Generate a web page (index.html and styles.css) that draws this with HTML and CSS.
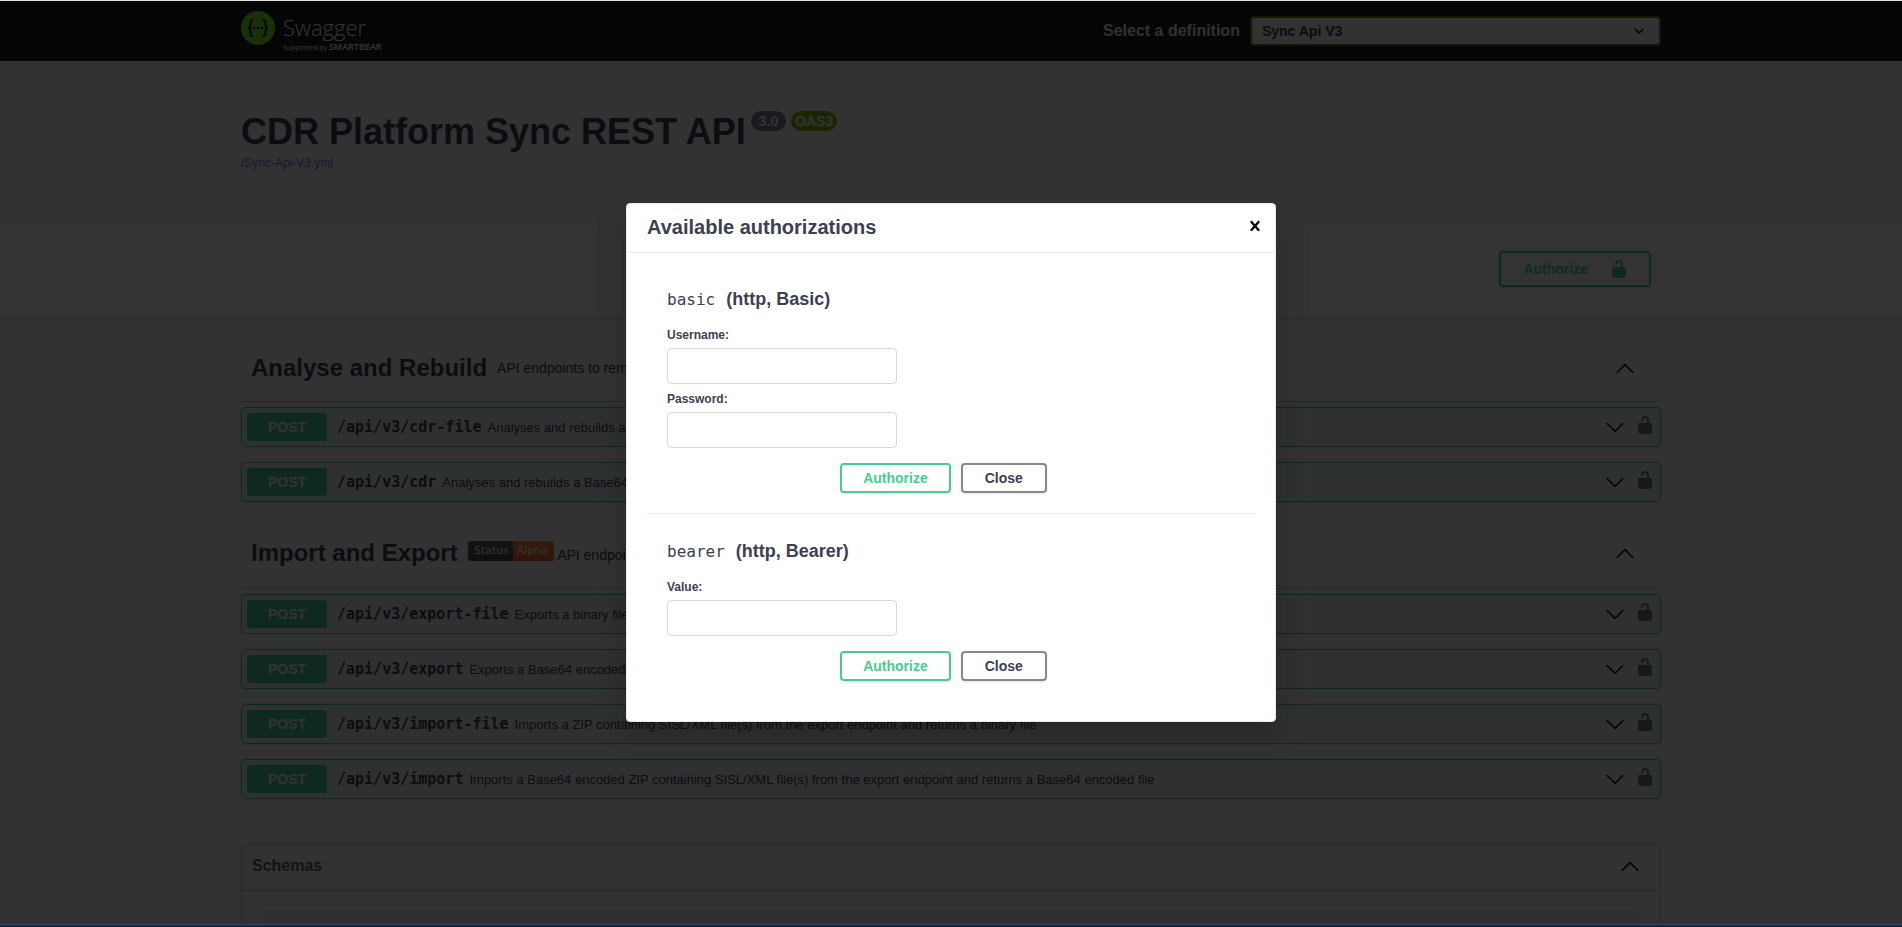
FILE: index.html
```html
<!DOCTYPE html>
<html lang="en">
<head>
    <meta charset="UTF-8">
    <meta name="viewport" content="width=device-width, initial-scale=1">
    <title>CDR Platform Sync REST API</title>
    <link rel="stylesheet" href="styles.css">
</head>

<body>
    <!-- shared icons -->
    <svg class="icon-defs" xmlns="http://www.w3.org/2000/svg">
        <symbol id="unlocked" viewBox="0 0 20 20">
            <path d="M15.8 8H14V5.6C14 2.703 12.665 1 10 1 7.334 1 6 2.703 6 5.6V6h2v-.801C8 3.754 8.797 3 10 3c1.203 0 2 .754 2 2.199V8H4c-.553 0-1 .646-1 1.199V17c0 .549.428 1.139.951 1.307l1.197.387C5.672 18.861 6.55 19 7.1 19h5.8c.549 0 1.428-.139 1.951-.307l1.196-.387c.524-.167.953-.757.953-1.306V9.199C17 8.646 16.352 8 15.8 8z"/>
        </symbol>
        <symbol id="arrow-down" viewBox="0 0 20 20">
            <path d="M17.418 6.109c.272-.268.709-.268.979 0s.271.701 0 .969l-7.908 7.83c-.27.268-.707.268-.979 0l-7.908-7.83c-.27-.268-.27-.701 0-.969.271-.268.709-.268.979 0L10 13.25l7.418-7.141z"/>
        </symbol>
        <symbol id="arrow-up" viewBox="0 0 20 20">
            <path d="M17.418 14.908c.272.268.709.268.979 0s.271-.701 0-.969l-7.908-7.83c-.27-.268-.707-.268-.979 0l-7.908 7.83c-.27.268-.27.701 0 .969.271.268.709.268.979 0L10 7.767l7.418 7.141z"/>
        </symbol>
        <symbol id="close" viewBox="0 0 20 20">
            <path d="M14.348 14.849c-.469.469-1.229.469-1.697 0L10 11.819l-2.651 3.029c-.469.469-1.229.469-1.697 0-.469-.469-.469-1.229 0-1.697l2.758-3.15-2.759-3.152c-.469-.469-.469-1.228 0-1.697.469-.469 1.228-.469 1.697 0L10 8.183l2.651-3.031c.469-.469 1.228-.469 1.697 0 .469.469.469 1.229 0 1.697l-2.758 3.152 2.758 3.15c.469.469.469 1.229 0 1.698z"/>
        </symbol>
    </svg>

    <div class="swagger-ui">
        <header class="topbar">
            <div class="wrapper topbar-wrapper">
                <a class="logo" href="#">
                    <svg class="logo-mark" viewBox="0 0 34 34">
                        <circle cx="17" cy="17" r="17" fill="#85ea2d"/>
                        <g fill="none" stroke="#173647" stroke-width="2">
                            <path d="M12.500 9H12q-2.500 0-2.500 2.500v2.500q0 3-2.500 3 2.500 0 2.500 3v2.500Q9.500 25 12 25h.500"/>
                            <path d="M21.500 9h.500q2.500 0 2.500 2.500v2.500q0 3 2.500 3-2.500 0-2.500 3v2.500q0 2.500-2.500 2.500h-.500"/>
                        </g>
                        <g fill="#173647">
                            <circle cx="13" cy="17" r="1.300"/>
                            <circle cx="17" cy="17" r="1.300"/>
                            <circle cx="21" cy="17" r="1.300"/>
                        </g>
                    </svg>
                    <span class="logo-text">
                        <span class="logo-name">Swagger<small>.</small></span>
                        <span class="logo-by">Supported by <b>SMARTBEAR</b></span>
                    </span>
                </a>
                <form class="definition">
                    <label for="select">Select a definition</label>
                    <select id="select">
                        <option>Sync Api V3</option>
                    </select>
                </form>
            </div>
        </header>

        <section class="wrapper info">
            <h1 class="title">CDR Platform Sync REST API
                <span class="versions"><span class="version">3.0</span><span class="version oas">OAS3</span></span>
            </h1>
            <a class="info-link" href="#">/Sync-Api-V3.yml</a>
        </section>

        <div class="scheme-container">
            <div class="wrapper schemes">
                <button class="btn authorize btn-scheme" type="button">
                    <span>Authorize</span>
                    <svg class="icon"><use href="#unlocked"/></svg>
                </button>
            </div>
        </div>

        <main class="wrapper operations">
            <section class="tag-section">
                <div class="tag">
                    <h2>Analyse and Rebuild</h2>
                    <p>API endpoints to remove risk from files</p>
                    <svg class="icon"><use href="#arrow-up"/></svg>
                </div>
                <div class="opblock">
                    <button class="method" type="button">POST</button>
                    <span class="path">/api/v3/cdr-file</span>
                    <span class="summary">Analyses and rebuilds a binary file and returns a binary file</span>
                    <svg class="icon"><use href="#arrow-down"/></svg>
                    <svg class="icon lock"><use href="#unlocked"/></svg>
                </div>
                <div class="opblock">
                    <button class="method" type="button">POST</button>
                    <span class="path">/api/v3/cdr</span>
                    <span class="summary">Analyses and rebuilds a Base64 encoded file and returns a Base64 encoded file</span>
                    <svg class="icon"><use href="#arrow-down"/></svg>
                    <svg class="icon lock"><use href="#unlocked"/></svg>
                </div>
            </section>

            <section class="tag-section">
                <div class="tag">
                    <h2>Import and Export</h2>
                    <p class="with-status"><span class="status"><span>Status</span><span class="alpha">Alpha</span></span> API endpoints to export and import files</p>
                    <svg class="icon"><use href="#arrow-up"/></svg>
                </div>
                <div class="opblock">
                    <button class="method" type="button">POST</button>
                    <span class="path">/api/v3/export-file</span>
                    <span class="summary">Exports a binary file and returns a ZIP containing SISL/XML file(s)</span>
                    <svg class="icon"><use href="#arrow-down"/></svg>
                    <svg class="icon lock"><use href="#unlocked"/></svg>
                </div>
                <div class="opblock">
                    <button class="method" type="button">POST</button>
                    <span class="path">/api/v3/export</span>
                    <span class="summary">Exports a Base64 encoded file and returns a Base64 encoded ZIP</span>
                    <svg class="icon"><use href="#arrow-down"/></svg>
                    <svg class="icon lock"><use href="#unlocked"/></svg>
                </div>
                <div class="opblock">
                    <button class="method" type="button">POST</button>
                    <span class="path">/api/v3/import-file</span>
                    <span class="summary">Imports a ZIP containing SISL/XML file(s) from the export endpoint and returns a binary file</span>
                    <svg class="icon"><use href="#arrow-down"/></svg>
                    <svg class="icon lock"><use href="#unlocked"/></svg>
                </div>
                <div class="opblock">
                    <button class="method" type="button">POST</button>
                    <span class="path">/api/v3/import</span>
                    <span class="summary">Imports a Base64 encoded ZIP containing SISL/XML file(s) from the export endpoint and returns a Base64 encoded file</span>
                    <svg class="icon"><use href="#arrow-down"/></svg>
                    <svg class="icon lock"><use href="#unlocked"/></svg>
                </div>
            </section>

            <section class="models">
                <h4>Schemas <svg class="icon"><use href="#arrow-up"/></svg></h4>
                <div class="model-container"></div>
            </section>
        </main>

        <!-- authorization dialog -->
        <div class="backdrop">
            <div class="modal" role="dialog" aria-labelledby="modal-title">
                <div class="modal-header">
                    <h3 id="modal-title">Available authorizations</h3>
                    <button class="close-modal" type="button" aria-label="Close dialog"><svg class="icon"><use href="#close"/></svg></button>
                </div>
                <div class="modal-content">
                    <form class="auth-container">
                        <h4><code>basic</code> (http, Basic)</h4>
                        <label for="username">Username:</label>
                        <input id="username" type="text">
                        <label for="password">Password:</label>
                        <input id="password" type="password">
                        <div class="auth-buttons">
                            <button class="btn authorize" type="button">Authorize</button>
                            <button class="btn" type="button">Close</button>
                        </div>
                    </form>
                    <form class="auth-container">
                        <h4><code>bearer</code> (http, Bearer)</h4>
                        <label for="token">Value:</label>
                        <input id="token" type="text">
                        <div class="auth-buttons">
                            <button class="btn authorize" type="button">Authorize</button>
                            <button class="btn" type="button">Close</button>
                        </div>
                    </form>
                </div>
            </div>
        </div>
    </div>
</body>
</html>
```

FILE: styles.css
```css
* {
    box-sizing: border-box;
}

body {
    margin: 0;
    height: 100vh;
    display: flex;
    flex-direction: column;
    border-top: 1px solid #dfe3e0;
    border-bottom: 2px solid #10264f;
    overflow: hidden;
    color: #3b4151;
    font-family: "Liberation Sans", Arial, sans-serif;
}

h1, h2, h3, h4, p {
    margin: 0;
}

.icon-defs {
    position: absolute;
    width: 0;
    height: 0;
}

.icon {
    width: 20px;
    height: 20px;
    flex: none;
}

.swagger-ui {
    position: relative;
    flex: 1;
    min-height: 0;
    overflow: hidden;
    background: #fafafa;
    border-bottom: 1px solid #3a4253;
}

.wrapper {
    width: 100%;
    max-width: 1460px;
    margin: 0 auto;
    padding: 0 20px;
}

/* top bar */
.topbar {
    background: #1b1b1b;
    padding: 10px 0;
}

.topbar-wrapper {
    display: flex;
    align-items: center;
    justify-content: space-between;
    height: 40px;
}

.logo {
    display: flex;
    align-items: flex-start;
    gap: 8px;
    height: 40px;
    color: #fff;
    text-decoration: none;
}

.logo-mark {
    width: 34px;
    height: 34px;
}

.logo-text {
    display: flex;
    flex-direction: column;
    font-family: "Open Sans", sans-serif;
}

.logo-name {
    font-size: 22px;
    font-weight: 300;
    line-height: 32px;
}

.logo-name small {
    font-size: 12px;
    line-height: 12px;
}

.logo-by {
    font-size: 7px;
    line-height: 8px;
}

.logo-by b {
    font-size: 9px;
    font-weight: 600;
    line-height: 8px;
}

.definition {
    display: flex;
    align-items: center;
    gap: 10px;
    width: 558px;
}

.definition label {
    flex: none;
    color: #f0f0f0;
    font-size: 16px;
    font-weight: bold;
}

.definition select {
    flex: 1;
    height: 30px;
    padding: 0 40px 0 10px;
    border: 2px solid #547f00;
    border-radius: 4px;
    background: #f7f7f7;
    color: #3b4151;
    font: bold 14px "Liberation Sans", Arial, sans-serif;
    appearance: none;
    background-image: url("data:image/svg+xml,%3Csvg xmlns='http://www.w3.org/2000/svg' viewBox='0 0 20 20'%3E%3Cpath d='M13.418 7.859c.271-.268.709-.268.978 0 .27.268.272.701 0 .969l-3.908 3.830c-.270.268-.707.268-.979 0l-3.908-3.830c-.270-.267-.270-.701 0-.969.271-.268.709-.268.978 0L10 11l3.418-3.141z'/%3E%3C/svg%3E");
    background-position: right 10px center;
    background-repeat: no-repeat;
    background-size: 20px;
}

/* title */
.info {
    padding-top: 49px;
    padding-bottom: 49px;
}

.title {
    display: flex;
    align-items: flex-start;
    gap: 5px;
    font-size: 36px;
    line-height: 44px;
}

.versions {
    display: flex;
    gap: 5px;
    padding-top: 1px;
}

.version {
    padding: 0 8px;
    border-radius: 10px;
    background: #7d8492;
    color: #fff;
    font-size: 14px;
    line-height: 20px;
}

.oas {
    padding: 0 4px;
    background: #89bf04;
}

.info-link {
    display: block;
    color: #4990e2;
    font-size: 12px;
    line-height: 18px;
    text-decoration: none;
}

.scheme-container {
    padding: 30px 0;
    background: #fff;
    box-shadow: 0 1px 2px 0 rgba(0, 0, 0, .15);
}

.schemes {
    display: flex;
    justify-content: flex-end;
    padding-right: 30px;
}

/* buttons */
.btn {
    height: 30px;
    padding: 0 22px;
    border: 2px solid #888;
    border-radius: 4px;
    background: transparent;
    box-shadow: 0 1px 2px rgba(0, 0, 0, .1);
    color: #3b4151;
    font: bold 14px "Liberation Sans", Arial, sans-serif;
    cursor: pointer;
}

.authorize {
    padding: 0 21px;
    border-color: #49cc90;
    color: #49cc90;
}

.btn-scheme {
    display: flex;
    align-items: center;
    gap: 21px;
    height: 36px;
    padding: 0 20px 0 22px;
}

.btn-scheme .icon {
    fill: #49cc90;
}

/* operations */
.operations {
    padding-top: 18px;
}

.tag {
    display: flex;
    align-items: center;
    gap: 10px;
    margin-bottom: 5px;
    padding: 20px 26px 20px 10px;
    border-bottom: 1px solid rgba(59, 65, 81, .3);
}

.tag h2 {
    font-size: 24px;
    line-height: 26px;
}

.tag p {
    flex: 1;
    font-size: 14px;
    line-height: 20px;
}

.tag .with-status {
    padding: 4px 0 3px;
}

.status {
    display: inline-flex;
    height: 20px;
    border-radius: 3px;
    overflow: hidden;
    background: linear-gradient(#666, #444);
    color: #fff;
    font: 11px/20px "DejaVu Sans", sans-serif;
    vertical-align: 6px;
}

.status span {
    padding: 0 4px 0 6px;
}

.status .alpha {
    padding: 0 6px 0 4px;
    background: linear-gradient(#fe8d50, #e5692b);
}

.opblock {
    display: flex;
    align-items: center;
    height: 40px;
    margin-bottom: 15px;
    padding: 0 5px;
    border: 1px solid #49cc90;
    border-radius: 4px;
    background: rgba(73, 204, 144, .1);
    box-shadow: 0 0 3px rgba(0, 0, 0, .19);
}

.method {
    width: 80px;
    height: 28px;
    padding: 0;
    border: 0;
    border-radius: 3px;
    background: #49cc90;
    color: #fff;
    font: bold 14px "Liberation Sans", Arial, sans-serif;
}

.path {
    padding: 0 6px 0 10px;
    font: bold 15px "DejaVu Sans Mono", monospace;
}

.summary {
    flex: 1;
    font-size: 13px;
}

.lock {
    margin: -4px 0 0 10px;
    opacity: .5;
}

/* schemas */
.models {
    margin-top: 45px;
    border: 1px solid rgba(59, 65, 81, .3);
    border-radius: 4px;
}

.models h4 {
    display: flex;
    align-items: center;
    justify-content: space-between;
    height: 46px;
    padding: 0 20px 4px 10px;
    border-bottom: 1px solid rgba(59, 65, 81, .3);
    color: #606060;
    font-size: 16px;
}

.model-container {
    height: 40px;
    margin: 20px;
    border-radius: 4px;
    background: rgba(0, 0, 0, .05);
}

/* dialog */
.backdrop {
    position: absolute;
    inset: 0;
    display: flex;
    align-items: center;
    justify-content: center;
    background: rgba(0, 0, 0, .8);
}

.modal {
    width: 650px;
    max-width: 100%;
    border: 1px solid #ebebeb;
    border-radius: 4px;
    background: #fff;
    box-shadow: 0 10px 30px 0 rgba(0, 0, 0, .2);
}

.modal-header {
    display: flex;
    align-items: center;
    justify-content: space-between;
    height: 49px;
    padding: 0 10px 2px 20px;
    border-bottom: 1px solid #ebebeb;
}

.modal-header h3 {
    font-size: 20px;
    font-weight: 600;
}

.close-modal {
    display: flex;
    padding: 0 0 2px;
    border: 0;
    background: none;
}

.modal-content {
    padding: 20px;
}

.auth-container {
    display: flex;
    flex-direction: column;
    align-items: flex-start;
    padding: 10px 20px 20px;
}

.auth-container + .auth-container {
    padding-top: 21px;
    border-top: 1px solid #ebebeb;
}

.auth-container h4 {
    margin: 4px 0 9px;
    font-size: 18px;
    line-height: 24px;
}

.auth-container code {
    margin-right: 6px;
    font: 16px "DejaVu Sans Mono", monospace;
}

.auth-container label {
    padding: 6px 0 4px;
    font-size: 12px;
    font-weight: bold;
    line-height: 18px;
}

.auth-container input {
    width: 230px;
    height: 36px;
    border: 1px solid #d9d9d9;
    border-radius: 4px;
}

.auth-buttons {
    display: flex;
    align-self: stretch;
    justify-content: center;
    gap: 10px;
    margin-top: 15px;
    padding-right: 15px;
}
```
